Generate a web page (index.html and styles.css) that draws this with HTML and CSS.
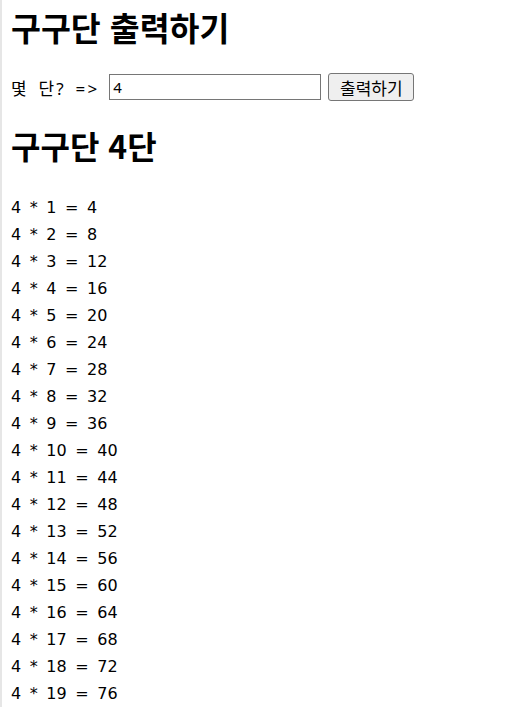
FILE: index.html
```html
<!DOCTYPE html>
<html lang="ko">
<head>
<meta charset="utf-8">
<link rel="stylesheet" href="styles.css">
</head>
<body>
<h1 class="title">구구단 출력하기</h1>
<div class="form-row">
  <label class="label" for="dan">몇 단? =&gt;</label>
  <input class="dan-input" id="dan" type="text" value="4">
  <button class="print-btn" type="button">출력하기</button>
</div>
<h2 class="result-title">구구단 4단</h2>
<div class="rows">
  <div class="row">4 * 1 = 4</div>
  <div class="row">4 * 2 = 8</div>
  <div class="row">4 * 3 = 12</div>
  <div class="row">4 * 4 = 16</div>
  <div class="row">4 * 5 = 20</div>
  <div class="row">4 * 6 = 24</div>
  <div class="row">4 * 7 = 28</div>
  <div class="row">4 * 8 = 32</div>
  <div class="row">4 * 9 = 36</div>
  <div class="row">4 * 10 = 40</div>
  <div class="row">4 * 11 = 44</div>
  <div class="row">4 * 12 = 48</div>
  <div class="row">4 * 13 = 52</div>
  <div class="row">4 * 14 = 56</div>
  <div class="row">4 * 15 = 60</div>
  <div class="row">4 * 16 = 64</div>
  <div class="row">4 * 17 = 68</div>
  <div class="row">4 * 18 = 72</div>
  <div class="row">4 * 19 = 76</div>
</div>
</body>
</html>
```
FILE: styles.css
```css
html {
  border-left: 2px solid #e6e6e6;
  background: #fff;
}
body {
  margin: 0 8px 0 9px;
  font-family: "Noto Sans", "Noto Sans CJK KR", sans-serif;
  font-size: 17px;
  color: #000;
}
.title {
  margin: 0;
  padding-top: 5px;
  font-family: "Noto Sans CJK KR", sans-serif;
  font-size: 32.5px;
  line-height: 44px;
  font-weight: bold;
}
.form-row {
  display: flex;
  align-items: center;
  margin-top: 24px;
  height: 28px;
}
.label {
  font-family: "Noto Sans", "Noto Sans CJK KR", sans-serif;
  font-size: 17px;
  margin-right: 10px;
  word-spacing: 3px;
  letter-spacing: 2.2px;
}
.dan-input {
  width: 212px;
  height: 26px;
  box-sizing: border-box;
  border: 1px solid #767676;
  padding: 1px 3px;
  font-family: "Noto Sans", sans-serif;
  font-size: 15px;
  margin: 0;
}
.print-btn {
  margin-left: 7px;
  height: 28px;
  width: 86px;
  box-sizing: border-box;
  border: 1px solid #767676;
  border-radius: 3px;
  background: #efefef;
  font-family: "Noto Sans CJK KR", sans-serif;
  font-size: 17px;
  padding: 0;
}
.result-title {
  margin: 0;
  margin-top: 22px;
  font-family: "Noto Sans CJK KR", sans-serif;
  font-size: 32px;
  line-height: 44px;
  font-weight: bold;
}
.rows {
  margin-top: 27px;
}
.row {
  font-family: "DejaVu Sans", sans-serif;
  line-height: 27px;
  font-size: 16px;
  word-spacing: 3.5px;
}
```
